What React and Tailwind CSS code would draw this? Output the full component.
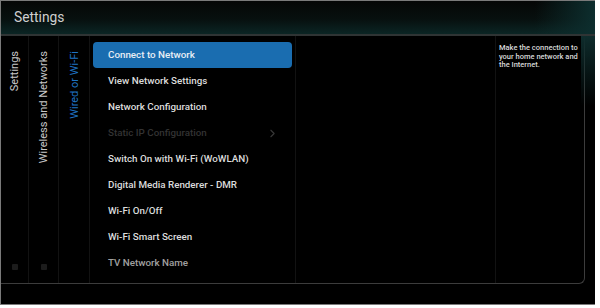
import { ChevronRight } from 'lucide-react';

const items = [
  { label: 'Connect to Network', selected: true },
  { label: 'View Network Settings' },
  { label: 'Network Configuration' },
  { label: 'Static IP Configuration', disabled: true, arrow: true },
  { label: 'Switch On with Wi-Fi (WoWLAN)' },
  { label: 'Digital Media Renderer - DMR' },
  { label: 'Wi-Fi On/Off' },
  { label: 'Wi-Fi Smart Screen' },
  { label: 'TV Network Name', faded: true },
];

const SideColumn = ({ label, width, active, marker = true }) => (
  <div className={`${width} h-full flex flex-col items-center justify-between border-r border-[#121212] pt-[15px] pb-[13px]`}>
    <div
      className={`rotate-180 text-[11px] leading-none whitespace-nowrap ${active ? 'text-[#1f74c4]' : 'text-[#c8c8c8]'}`}
      style={{ writingMode: 'vertical-rl' }}
    >
      {label}
    </div>
    {marker && <div className="w-[6px] h-[6px] bg-[#1c1c1c] rounded-[1px]" />}
  </div>
);

export default function App() {
  return (
    <div className="w-[600px] h-[308px] bg-white font-['Roboto','Liberation_Sans',Arial,sans-serif]">
      <div className="w-[595px] h-[305px] bg-black border border-r-0 border-[#7a7a7a] flex flex-col">
        <div className="h-[33px] shrink-0 flex items-center pl-[13px] bg-[linear-gradient(180deg,#050606_0%,#07100f_55%,#0b2524_100%)] relative overflow-hidden">
          <span className="text-[13.8px] text-[#cfcfcf]">Settings</span>
          <div className="absolute right-0 top-0 h-full w-[60px] bg-[linear-gradient(90deg,transparent,#0d2e2e)]" />
        </div>
        <div className="h-[2px] shrink-0 bg-[#2f3434]" />
        <div className="flex-1 relative">
          <div className="absolute right-0 top-0 w-[14px] h-[70px] bg-[linear-gradient(180deg,#0e2c2c,transparent)]" />
          <div className="h-[248px] mr-[10px] border-r border-b border-[#3c3c3c] rounded-br-[6px] flex">
            <SideColumn label="Settings" width="w-[28px]" />
            <SideColumn label="Wireless and Networks" width="w-[30px]" />
            <SideColumn label="Wired or Wi-Fi" width="w-[31px]" active marker={false} />
            <div className="w-[206px] border-r border-[#121212] pt-[6px] pl-[3px] pr-[3px]">
              {items.map((it) => (
                <div
                  key={it.label}
                  className={`h-[26px] flex items-center justify-between pl-[15px] pr-[13px] rounded-[4px] text-[9.8px] font-medium ${
                    it.selected
                      ? 'bg-[#1a6db0] text-[#e8eef5]'
                      : it.disabled
                      ? 'text-[#333333]'
                      : it.faded
                      ? 'text-[#a0a0a0]'
                      : 'text-[#dcdcdc]'
                  }`}
                >
                  <span>{it.label}</span>
                  {it.arrow && <ChevronRight size={13} strokeWidth={2} className="text-[#383838]" />}
                </div>
              ))}
            </div>
            <div className="w-[200px] border-r border-[#121212]" />
            <div className="flex-1 pl-[3px] pt-[8px] text-[7.5px] leading-[8.5px] text-[#d8d8d8] font-medium">
              Make the connection to<br />your home network and<br />the Internet.
            </div>
          </div>
        </div>
      </div>
    </div>
  );
}
